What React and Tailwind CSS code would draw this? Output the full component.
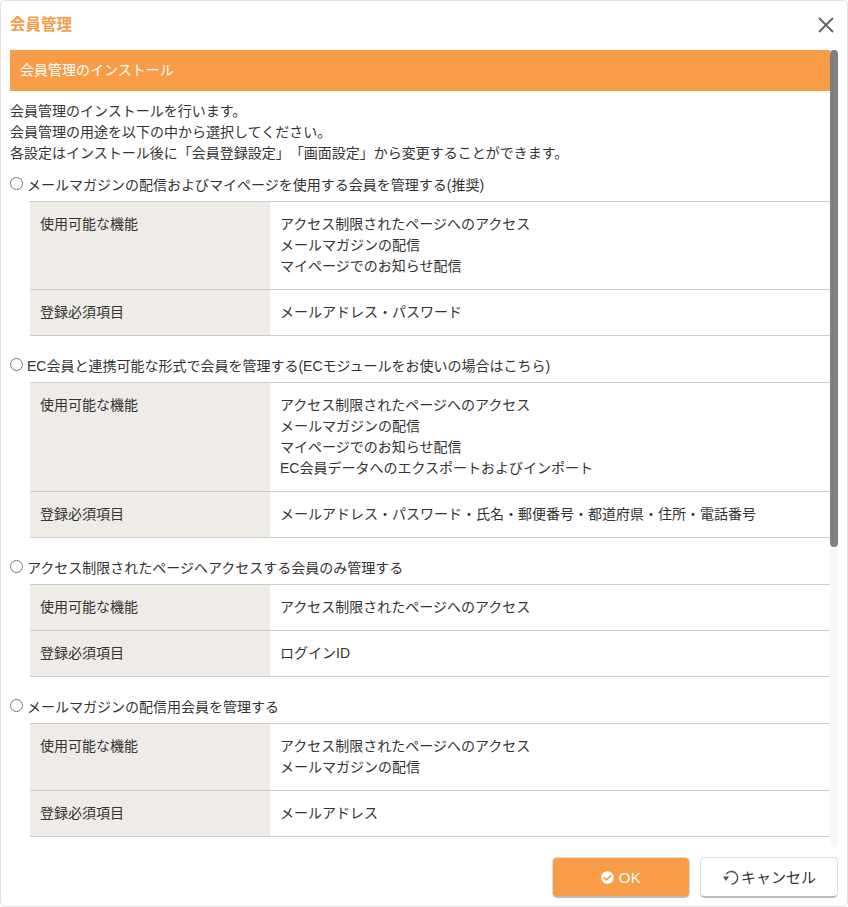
import { FaCheckCircle } from "react-icons/fa";

const options = [
  {
    label: "メールマガジンの配信およびマイページを使用する会員を管理する(推奨)",
    features: ["アクセス制限されたページへのアクセス", "メールマガジンの配信", "マイページでのお知らせ配信"],
    required: "メールアドレス・パスワード",
  },
  {
    label: "EC会員と連携可能な形式で会員を管理する(ECモジュールをお使いの場合はこちら)",
    features: [
      "アクセス制限されたページへのアクセス",
      "メールマガジンの配信",
      "マイページでのお知らせ配信",
      "EC会員データへのエクスポートおよびインポート",
    ],
    required: "メールアドレス・パスワード・氏名・郵便番号・都道府県・住所・電話番号",
  },
  {
    label: "アクセス制限されたページへアクセスする会員のみ管理する",
    features: ["アクセス制限されたページへのアクセス"],
    required: "ログインID",
  },
  {
    label: "メールマガジンの配信用会員を管理する",
    features: ["アクセス制限されたページへのアクセス", "メールマガジンの配信"],
    required: "メールアドレス",
  },
];

function Option({ option }) {
  return (
    <div className="mb-[19px]">
      <label className="flex items-center h-[21px] mt-[10px] mb-[6px]">
        <input type="radio" name="usage" className="w-[13px] h-[13px] mr-[4px] mb-[3px] shrink-0" />
        <span className="pt-[1px]">{option.label}</span>
      </label>
      <div className="ml-5 border-t border-[#ccc]">
        <div className="flex border-b border-[#ccc]">
          <div className="w-60 shrink-0 bg-[#efebe6] px-[10px] py-3">使用可能な機能</div>
          <div className="flex-1 px-[10px] py-3">
            {option.features.map((f) => (
              <div key={f}>{f}</div>
            ))}
          </div>
        </div>
        <div className="flex border-b border-[#ccc]">
          <div className="w-60 shrink-0 bg-[#efebe6] px-[10px] py-3">登録必須項目</div>
          <div className="flex-1 px-[10px] py-3">{option.required}</div>
        </div>
      </div>
    </div>
  );
}

export default function App() {
  return (
    <div
      className="w-[848px] h-[907px] bg-white border border-[#e2e2e2] rounded-[5px] flex flex-col text-sm leading-[21px] text-[#333] overflow-hidden [text-spacing-trim:space-all]"
      style={{ fontFamily: '"Liberation Sans", "Noto Sans CJK JP", sans-serif' }}
    >
      <div className="h-[49px] shrink-0 flex items-center justify-between pl-[9px] pr-[13px] pb-[2px]">
        <h1 className="font-bold text-[15.5px] text-[#f89c47]">会員管理</h1>
        <svg width="16" height="16" viewBox="0 0 16 16" className="text-[#666]">
          <path d="M1 1 L15 15 M15 1 L1 15" stroke="currentColor" strokeWidth="2" fill="none" />
        </svg>
      </div>
      <div className="h-[797px] shrink-0 mx-[9px] flex">
        <div className="flex-1 min-w-0 overflow-hidden">
          <div className="h-[41px] bg-[#f89c47] text-white flex items-center px-[10px]">会員管理のインストール</div>
          <div className="mt-[10px]">
            <p>会員管理のインストールを行います。</p>
            <p>会員管理の用途を以下の中から選択してください。</p>
            <p>各設定はインストール後に「会員登録設定」「画面設定」から変更することができます。</p>
          </div>
          {options.map((o) => (
            <Option key={o.label} option={o} />
          ))}
        </div>
        <div className="w-2 shrink-0 bg-[#f8f8f8] rounded">
          <div className="h-[497px] bg-[#808080] rounded" />
        </div>
      </div>
      <div className="flex-1 flex justify-end items-start gap-[10px] pt-[10px] pr-[9px] text-[15px]">
        <button className="w-[138px] h-[41px] rounded-[5px] bg-[#f89c47] border border-[#ddd] border-b-2 border-b-[#bbb] text-white flex items-center justify-center gap-[5px] tracking-[0.5px]">
          <FaCheckCircle className="text-[13px]" />
          OK
        </button>
        <button className="w-[138px] h-[41px] rounded-[5px] bg-white border border-[#ddd] border-b-2 border-b-[#bbb] text-[#333] flex items-center justify-center gap-[1px]">
          <svg width="18" height="16" viewBox="0 0 18 16" fill="none">
            <path d="M4.2 5 A6.3 6.3 0 1 1 9.5 15" stroke="#555" strokeWidth="1.5" />
            <path d="M1 7.5 L7 7.5 L4 12 Z" fill="#555" />
          </svg>
          キャンセル
        </button>
      </div>
    </div>
  );
}
